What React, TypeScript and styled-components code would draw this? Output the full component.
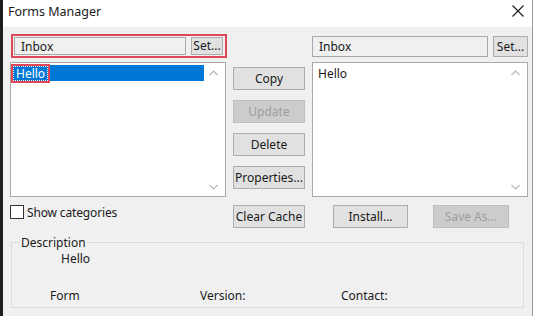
import React from "react";
import styled, { createGlobalStyle } from "styled-components";

const Global = createGlobalStyle`
  html, body { margin: 0; padding: 0; background: #f0f0f0; }
  body { font-family: "Noto Sans", "Open Sans", sans-serif; font-size: 12px; color: #1a1a1a; }
  * { box-sizing: border-box; }
`;

const Window = styled.div`
  width: 533px;
  height: 316px;
  background: #f0f0f0;
  border-left: 3px solid #1e1e1e;
  border-right: 1px solid #9a9a9a;
  display: flex;
  flex-direction: column;
  overflow: hidden;
`;

const TitleBar = styled.div`
  height: 27px;
  background: #ffffff;
  display: flex;
  align-items: center;
  justify-content: space-between;
  padding: 0 8px 0 5px;
`;

const Title = styled.span`
  font-size: 12.5px;
  color: #1a1a1a;
  padding-bottom: 5px;
`;

const Close = styled.svg`
  width: 12px;
  height: 12px;
  margin-bottom: 6px;
`;

const Body = styled.div`
  flex: 1;
  padding: 8px 0 0 7px;
  display: flex;
  flex-direction: column;
`;

const Main = styled.div`
  display: grid;
  grid-template-columns: 216px 72px 216px;
  column-gap: 7px;
`;

const Column = styled.div`
  display: flex;
  flex-direction: column;
  gap: 5px;
`;

const ComboRow = styled.div<{ $marked?: boolean }>`
  display: flex;
  gap: 5px;
  height: 22px;
  ${(p) =>
    p.$marked
      ? `outline: 2px solid #e0475a; outline-offset: -1px; padding: 2px 3px 2px 2px; margin-left: 2px;`
      : `padding: 1px 0 0 0;`}
`;

const Field = styled.div`
  flex: 1;
  background: #f0f0f0;
  border: 1px solid #a8a8a8;
  display: flex;
  align-items: center;
  padding: 0 6px;
  font-size: 12px;
`;

const SmallButton = styled.div<{ $w: number }>`
  width: ${(p) => p.$w}px;
  background: #e1e1e1;
  border: 1px solid #adadad;
  display: flex;
  align-items: center;
  justify-content: center;
  font-size: 12px;
  padding-bottom: 1px;
`;

const List = styled.div`
  height: 135px;
  background: #ffffff;
  border: 1px solid #a8a8a8;
  display: flex;
  padding: 2px 2px 2px 1px;
`;

const Items = styled.div`
  flex: 1;
  display: flex;
  flex-direction: column;
`;

const Item = styled.div<{ $selected?: boolean }>`
  height: 16px;
  display: flex;
  align-items: center;
  padding-left: ${(p) => (p.$selected ? "1px" : "4px")};
  background: ${(p) => (p.$selected ? "#0078d7" : "transparent")};
  color: ${(p) => (p.$selected ? "#ffffff" : "#1a1a1a")};
`;

const SelText = styled.span`
  border: 1px dotted #ffffff;
  outline: 2px solid #e0475a;
  outline-offset: 0px;
  padding: 0 2px;
  line-height: 13px;
`;

const Scroll = styled.div`
  width: 19px;
  display: flex;
  flex-direction: column;
  justify-content: space-between;
  align-items: center;
  padding: 5px 0 4px;
`;

const Chevron = styled.svg`
  width: 9px;
  height: 6px;
`;

const Buttons = styled.div`
  display: flex;
  flex-direction: column;
  gap: 10px;
  padding-top: 32px;
`;

const Button = styled.div<{ $disabled?: boolean; $w?: number }>`
  height: 23px;
  width: ${(p) => (p.$w ? `${p.$w}px` : "100%")};
  background: ${(p) => (p.$disabled ? "#cccccc" : "#e1e1e1")};
  border: 1px solid ${(p) => (p.$disabled ? "#bfbfbf" : "#adadad")};
  color: ${(p) => (p.$disabled ? "#9d9d9d" : "#1a1a1a")};
  display: flex;
  align-items: center;
  justify-content: center;
  font-size: 12px;
  white-space: nowrap;
  padding-bottom: 1px;
`;

const BottomRow = styled.div`
  display: grid;
  grid-template-columns: 216px 72px 216px;
  column-gap: 7px;
  margin-top: 8px;
  height: 23px;
`;

const CheckLabel = styled.label`
  display: flex;
  align-items: center;
  gap: 3px;
  padding-left: 0;
  margin-top: -9px;
  letter-spacing: -0.15px;
`;

const Box = styled.span`
  width: 14px;
  height: 14px;
  background: #ffffff;
  border: 1px solid #333333;
`;

const RightButtons = styled.div`
  display: flex;
  gap: 25px;
  padding-left: 21px;
`;

const Group = styled.fieldset`
  margin: 8px 0 0 1px;
  width: 513px;
  height: 72px;
  border: 1px solid #dcdcdc;
  padding: 0;
  display: flex;
  flex-direction: column;
`;

const Legend = styled.legend`
  padding: 0 1px;
  margin-left: 8px;
  font-size: 12px;
  line-height: 13px;
`;

const DescText = styled.div`
  padding-left: 49px;
  margin-top: 3px;
  line-height: 14px;
`;

const Fields = styled.div`
  display: grid;
  grid-template-columns: 150px 141px 1fr;
  padding-left: 38px;
  margin-top: 23px;
  line-height: 14px;
`;

const chevronUp = (
  <Chevron viewBox="0 0 9 6">
    <path d="M0.5 5 L4.5 1 L8.5 5" fill="none" stroke="#b8b8b8" strokeWidth="1.2" />
  </Chevron>
);
const chevronDown = (
  <Chevron viewBox="0 0 9 6">
    <path d="M0.5 1 L4.5 5 L8.5 1" fill="none" stroke="#b8b8b8" strokeWidth="1.2" />
  </Chevron>
);

export default function App() {
  return (
    <>
      <Global />
      <Window>
        <TitleBar>
          <Title>Forms Manager</Title>
          <Close viewBox="0 0 12 12">
            <path d="M0.5 0.5 L11.5 11.5 M11.5 0.5 L0.5 11.5" stroke="#1a1a1a" strokeWidth="1.1" />
          </Close>
        </TitleBar>
        <Body>
          <Main>
            <Column>
              <ComboRow $marked>
                <Field>Inbox</Field>
                <SmallButton $w={32}>Set...</SmallButton>
              </ComboRow>
              <List>
                <Items>
                  <Item $selected>
                    <SelText>Hello</SelText>
                  </Item>
                </Items>
                <Scroll>
                  {chevronUp}
                  {chevronDown}
                </Scroll>
              </List>
            </Column>
            <Buttons>
              <Button>Copy</Button>
              <Button $disabled>Update</Button>
              <Button>Delete</Button>
              <Button>Properties...</Button>
            </Buttons>
            <Column>
              <ComboRow>
                <Field>Inbox</Field>
                <SmallButton $w={35}>Set...</SmallButton>
              </ComboRow>
              <List>
                <Items>
                  <Item>Hello</Item>
                </Items>
                <Scroll>
                  {chevronUp}
                  {chevronDown}
                </Scroll>
              </List>
            </Column>
          </Main>
          <BottomRow>
            <CheckLabel>
              <Box />
              Show categories
            </CheckLabel>
            <Button>Clear Cache</Button>
            <RightButtons>
              <Button $w={75}>Install...</Button>
              <Button $w={76} $disabled>Save As...</Button>
            </RightButtons>
          </BottomRow>
          <Group>
            <Legend>Description</Legend>
            <DescText>Hello</DescText>
            <Fields>
              <span>Form</span>
              <span>Version:</span>
              <span>Contact:</span>
            </Fields>
          </Group>
        </Body>
      </Window>
    </>
  );
}
